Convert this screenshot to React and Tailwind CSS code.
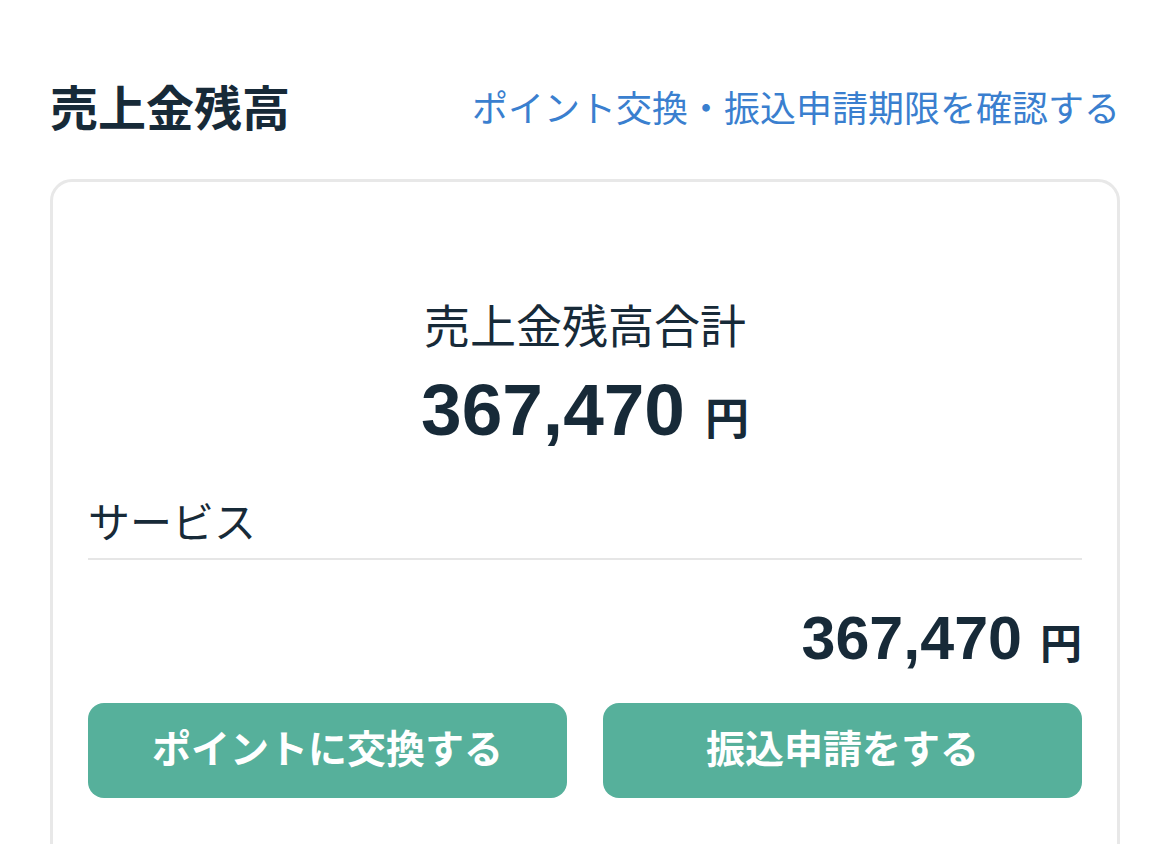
export default function App() {
  const font = { fontFamily: '"Liberation Sans", "Noto Sans CJK JP", sans-serif' };
  return (
    <div
      className="h-[844px] w-[1170px] overflow-hidden bg-white px-[50px] pt-[87px] text-[#172a38]"
      style={font}
    >
      <div className="flex items-center justify-between">
        <h1 className="text-[48px] font-bold leading-[46px]">売上金残高</h1>
        <a href="#" className="text-[36px] leading-[46px] text-[#3a7fcf]">
          ポイント交換・振込申請期限を確認する
        </a>
      </div>

      <div className="mt-[46px] h-[800px] rounded-[22px] border-[3px] border-[#e8e8e8] px-[35px] pt-[117px]">
        <div className="flex flex-col items-center">
          <p className="text-[46px] leading-[56px]">売上金残高合計</p>
          <p className="mt-[15px] flex items-baseline leading-[80px]">
            <span className="text-[73px] font-bold">367,470</span>
            <span className="ml-[20px] text-[44px] font-semibold">円</span>
          </p>
        </div>

        <div className="mt-[39px] border-b-2 border-[#e6e6e6] pb-[9px]">
          <p className="text-[42px] leading-[50px]">サービス</p>
        </div>

        <p className="mt-[43px] flex items-baseline justify-end leading-[70px]">
          <span className="text-[61px] font-bold">367,470</span>
          <span className="ml-[18px] text-[42px] font-semibold">円</span>
        </p>

        <div className="mt-[23px] grid grid-cols-2 gap-[36px]">
          <button className="h-[95px] rounded-[16px] bg-[#56b09b] text-[39px] font-bold text-white">
            ポイントに交換する
          </button>
          <button className="h-[95px] rounded-[16px] bg-[#56b09b] text-[39px] font-bold text-white">
            振込申請をする
          </button>
        </div>
      </div>
    </div>
  );
}
